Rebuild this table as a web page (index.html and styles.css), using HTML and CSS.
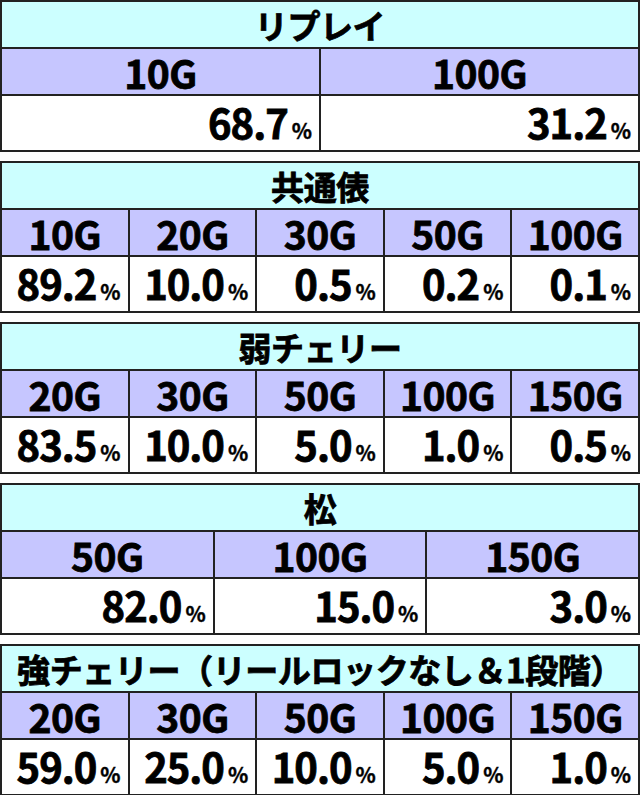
FILE: index.html
```html
<!DOCTYPE html>
<html lang="ja">
<head>
<meta charset="utf-8">
<title>表</title>
<link rel="stylesheet" href="styles.css">
</head>
<body>
<div class="tbl">
  <div class="title">リプレイ</div>
  <div class="row cols2">
    <div class="hd">10G</div><div class="hd">100G</div>
  </div>
  <div class="row cols2">
    <div class="val">68.7<span class="pc">%</span></div><div class="val">31.2<span class="pc">%</span></div>
  </div>
</div>

<div class="tbl">
  <div class="title">共通俵</div>
  <div class="row cols5">
    <div class="hd">10G</div><div class="hd">20G</div><div class="hd">30G</div><div class="hd">50G</div><div class="hd">100G</div>
  </div>
  <div class="row cols5">
    <div class="val">89.2<span class="pc">%</span></div><div class="val">10.0<span class="pc">%</span></div><div class="val">0.5<span class="pc">%</span></div><div class="val">0.2<span class="pc">%</span></div><div class="val">0.1<span class="pc">%</span></div>
  </div>
</div>

<div class="tbl">
  <div class="title">弱チェリー</div>
  <div class="row cols5">
    <div class="hd">20G</div><div class="hd">30G</div><div class="hd">50G</div><div class="hd">100G</div><div class="hd">150G</div>
  </div>
  <div class="row cols5">
    <div class="val">83.5<span class="pc">%</span></div><div class="val">10.0<span class="pc">%</span></div><div class="val">5.0<span class="pc">%</span></div><div class="val">1.0<span class="pc">%</span></div><div class="val">0.5<span class="pc">%</span></div>
  </div>
</div>

<div class="tbl">
  <div class="title">松</div>
  <div class="row cols3">
    <div class="hd">50G</div><div class="hd">100G</div><div class="hd">150G</div>
  </div>
  <div class="row cols3">
    <div class="val">82.0<span class="pc">%</span></div><div class="val">15.0<span class="pc">%</span></div><div class="val">3.0<span class="pc">%</span></div>
  </div>
</div>

<div class="tbl">
  <div class="title">強チェリー（リールロックなし＆1段階）</div>
  <div class="row cols5">
    <div class="hd">20G</div><div class="hd">30G</div><div class="hd">50G</div><div class="hd">100G</div><div class="hd">150G</div>
  </div>
  <div class="row cols5">
    <div class="val">59.0<span class="pc">%</span></div><div class="val">25.0<span class="pc">%</span></div><div class="val">10.0<span class="pc">%</span></div><div class="val">5.0<span class="pc">%</span></div><div class="val">1.0<span class="pc">%</span></div>
  </div>
</div>
</body>
</html>
```
FILE: styles.css
```css
html, body {
  margin: 0;
  padding: 0;
  background: #ffffff;
}
body {
  width: 640px;
  font-family: "Noto Sans CJK JP", "Noto Sans", sans-serif;
  font-weight: 700;
  color: #000;
  -webkit-text-stroke: 0.8px #000;
}
.tbl {
  background: #222;
  padding: 2px;
  display: flex;
  flex-direction: column;
  gap: 2px;
  margin-bottom: 9px;
}
.title {
  background: #ccffff;
  height: 45px;
  display: flex;
  align-items: center;
  justify-content: center;
  font-size: 33px;
  line-height: 40px;
  letter-spacing: -0.4px;
  white-space: nowrap;
}
.row {
  display: grid;
  gap: 2px;
}
.cols2 { grid-template-columns: repeat(2, 1fr); }
.cols3 { grid-template-columns: repeat(3, 1fr); }
.cols5 { grid-template-columns: repeat(5, 1fr); }
.hd {
  background: #c6c6ff;
  height: 45px;
  display: flex;
  align-items: center;
  justify-content: center;
  font-size: 39px;
  line-height: 42px;
  letter-spacing: -0.5px;
}
.val {
  background: #fff;
  height: 54px;
  display: flex;
  align-items: baseline;
  justify-content: flex-end;
  padding: 2px 7px 0 0;
  box-sizing: border-box;
  font-size: 40px;
  line-height: 48px;
  letter-spacing: -1px;
}
.pc {
  font-size: 21px;
  margin-left: 4px;
  letter-spacing: 0;
  -webkit-text-stroke: 0.4px #000;
}
```
